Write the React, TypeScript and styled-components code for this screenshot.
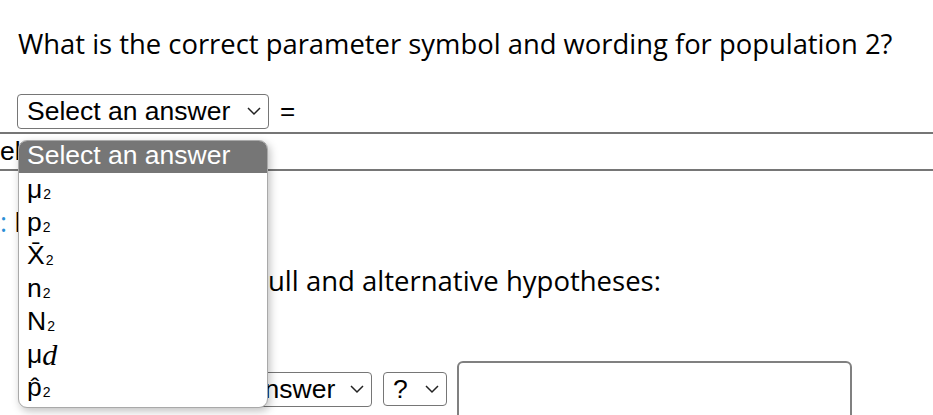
import React from "react";
import styled, { createGlobalStyle } from "styled-components";

const GlobalStyle = createGlobalStyle`
  html, body {
    margin: 0;
    padding: 0;
    background: #ffffff;
    overflow: hidden;
  }
  body {
    width: 933px;
    height: 415px;
    font-family: "Open Sans", "Liberation Sans", sans-serif;
    color: #000;
  }
`;

const Page = styled.div`
  position: relative;
  width: 933px;
  height: 415px;
  overflow: hidden;
`;

const Question = styled.p`
  margin: 0;
  padding: 28px 0 0 18px;
  font-size: 27.4px;
  line-height: 32px;
  white-space: nowrap;
`;

const AnswerRow = styled.div`
  display: flex;
  align-items: center;
  gap: 11px;
  padding: 34px 0 0 17px;
`;

const SelectBox = styled.div<{ $width: number; $height?: number }>`
  box-sizing: border-box;
  width: ${(p) => p.$width}px;
  height: ${(p) => p.$height ?? 35}px;
  display: flex;
  align-items: center;
  justify-content: space-between;
  padding: 0 7px 0 9px;
  border: 1.5px solid #767676;
  border-radius: 4px;
  background: #fff;
  font-family: "Liberation Sans", Arial, sans-serif;
  font-size: 26.5px;
  white-space: nowrap;
  overflow: hidden;
`;

const Equals = styled.span`
  font-family: "Liberation Sans", Arial, sans-serif;
  font-size: 26px;
`;

const TableRow = styled.div`
  margin-top: 3px;
  height: 35px;
  border-top: 2px solid #767676;
  border-bottom: 2px solid #767676;
  display: flex;
  align-items: center;
  font-family: "Liberation Sans", Arial, sans-serif;
  font-size: 26.5px;
  line-height: 1;
`;

const StepLine = styled.div`
  margin-top: 36px;
  font-size: 27px;
  line-height: 30px;
`;

const Colon = styled.span`
  color: #2a8fd6;
`;

const HypoBlock = styled.div`
  margin: 30px 0 0 18px;
  border-left: 2px solid #e0904a;
  padding-left: 248px;
  font-size: 27.5px;
  line-height: 28px;
  white-space: nowrap;
`;

const FieldRow = styled.div`
  display: flex;
  align-items: flex-start;
  gap: 10px;
  margin: 66px 0 0 122px;
`;

const PushDown = styled.div`
  padding-top: 11px;
  display: flex;
  gap: 11px;
`;

const TextBox = styled.div`
  box-sizing: border-box;
  width: 395px;
  height: 80px;
  border: 2px solid #808080;
  border-radius: 6px;
`;

const Popup = styled.div`
  position: absolute;
  left: 18px;
  top: 140px;
  width: 250px;
  height: 268px;
  box-sizing: border-box;
  background: #fff;
  border: 1px solid #a9a9a9;
  border-radius: 9px;
  box-shadow: 2px 3px 8px rgba(0, 0, 0, 0.25);
  overflow: hidden;
  font-family: "Liberation Sans", Arial, sans-serif;
  font-size: 26.5px;
`;

const Option = styled.div<{ $active?: boolean }>`
  box-sizing: border-box;
  height: ${(p) => (p.$active ? 32 : 33)}px;
  display: flex;
  align-items: center;
  padding: 0 0 ${(p) => (p.$active ? 3 : 0)}px 8px;
  background: ${(p) => (p.$active ? "#767676" : "transparent")};
  color: ${(p) => (p.$active ? "#fff" : "#000")};
  white-space: nowrap;
`;

const Sub = styled.span`
  font-size: 14px;
  margin-left: 1px;
  position: relative;
  top: 4px;
`;

const ItalicD = styled.span`
  font-family: "Liberation Serif", "Times New Roman", serif;
  font-style: italic;
  font-size: 30px;
`;

const Chevron = () => (
  <svg width="14" height="9" viewBox="0 0 14 9" fill="none">
    <polyline points="1,1 7,7 13,1" stroke="#222" strokeWidth="1.5" />
  </svg>
);

const options: { sym: React.ReactNode }[] = [
  { sym: <>μ<Sub>2</Sub></> },
  { sym: <>p<Sub>2</Sub></> },
  { sym: <>X̄<Sub>2</Sub></> },
  { sym: <>n<Sub>2</Sub></> },
  { sym: <>N<Sub>2</Sub></> },
  { sym: <>μ<ItalicD>d</ItalicD></> },
  { sym: <>p̂<Sub>2</Sub></> },
];

export default function App() {
  return (
    <>
      <GlobalStyle />
      <Page>
        <Question>What is the correct parameter symbol and wording for population 2?</Question>

        <AnswerRow>
          <SelectBox $width={252} $height={35}>
            <span>Select an answer</span>
            <Chevron />
          </SelectBox>
          <Equals>=</Equals>
        </AnswerRow>

        <TableRow>el</TableRow>

        <StepLine>
          <Colon>:</Colon> H
        </StepLine>

        <HypoBlock>ull and alternative hypotheses:</HypoBlock>

        <FieldRow>
          <PushDown>
            <SelectBox $width={250} $height={35}>
              <span>Select an answer</span>
              <Chevron />
            </SelectBox>
            <SelectBox $width={64} $height={34}>
              <span>?</span>
              <Chevron />
            </SelectBox>
          </PushDown>
          <TextBox />
        </FieldRow>

        <Popup>
          <Option $active>Select an answer</Option>
          {options.map((o, i) => (
            <Option key={i}>{o.sym}</Option>
          ))}
        </Popup>
      </Page>
    </>
  );
}
